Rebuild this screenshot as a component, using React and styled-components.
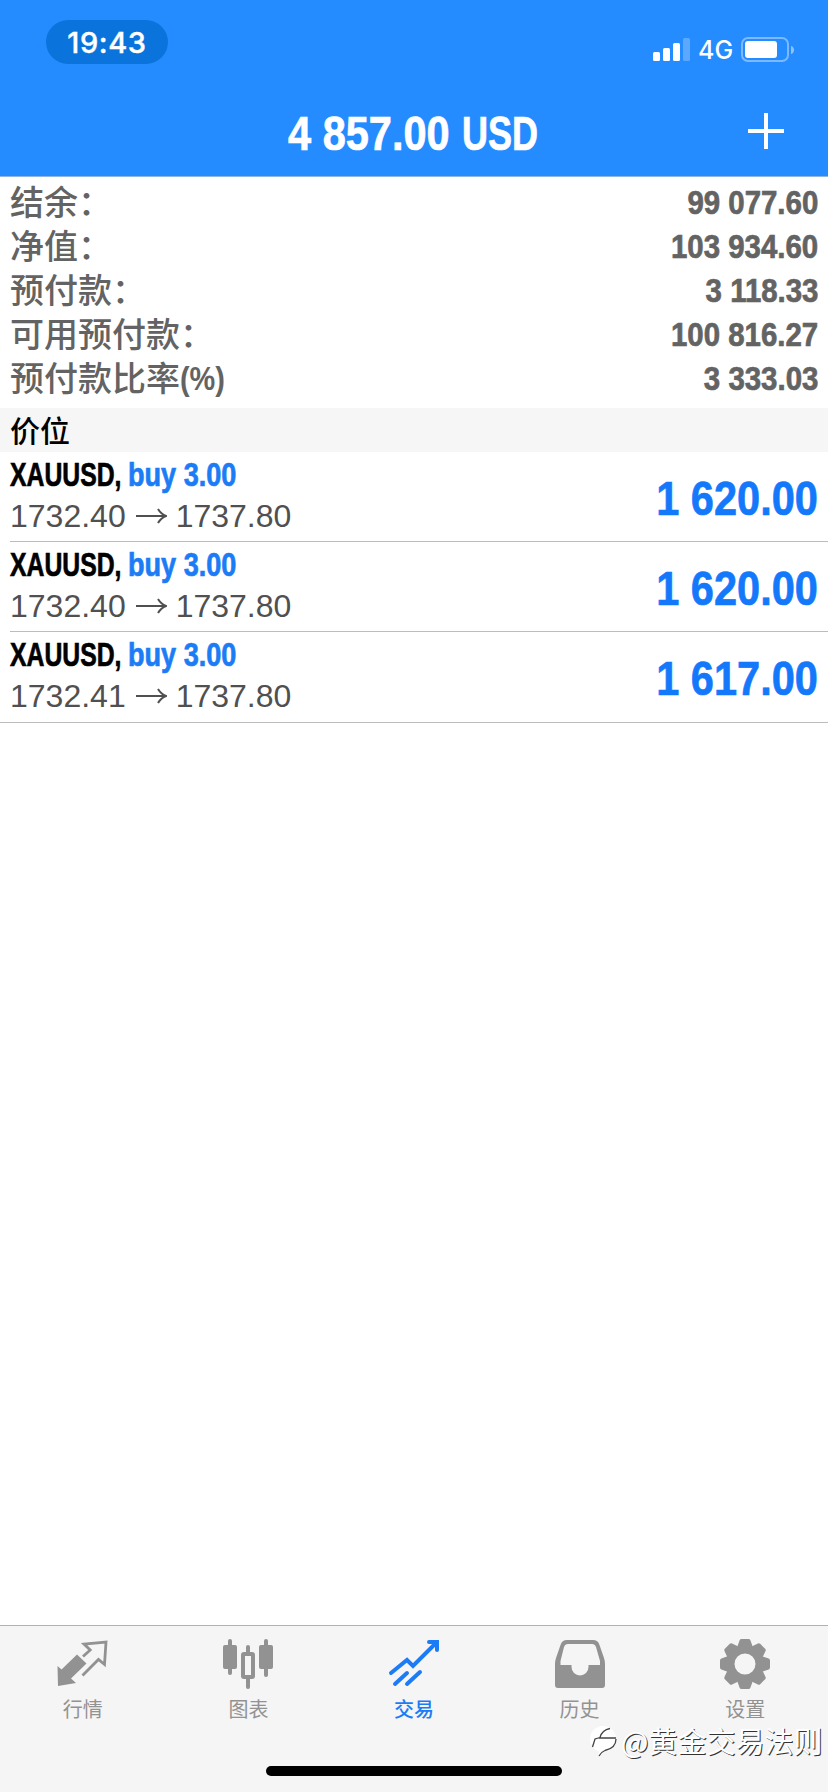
import React from 'react'
import styled, { createGlobalStyle } from 'styled-components'

const sans = '"Liberation Sans", "Noto Sans CJK SC", sans-serif'
const cjk = '"Noto Sans CJK SC", sans-serif'

const GlobalStyle = createGlobalStyle`
*{
box-sizing:border-box;
}
body{
margin:0;
background:#fff;
}
`

const Container = styled.div`
width: 828px;
height: 1792px;
display: flex;
flex-direction:column;
overflow:hidden;
background:#fff;
`

// bold text squeezed horizontally, $width is the room it takes in the line
const Condensed = styled.span`
display: inline-block;
width: ${p => p.$width ? p.$width + 'px' : 'auto'};
white-space:pre;
-webkit-text-stroke: .7px currentColor;
transform: scaleX(${p => p.$scale || 0.865});
transform-origin: ${p => p.$right ? 'right' : 'left'} center;
`

const Header = styled.header`
height: 177px;
display: flex;
flex-direction:column;
background:#258cff;
color:white;
border-bottom: 1px solid #8fb5e3;
`

const StatusBar = styled.div`
height: 84px;
padding: 20px 33px 0 46px;
display: flex;
justify-content: space-between;
`

const Time = styled.div`
width: 122px;
height: 44px;
border-radius: 22px;
background:#0a74dc;
font: 500 29px/45px Inter, sans-serif;
letter-spacing: .6px;
-webkit-text-stroke: .4px white;
text-align:center;
`

const Status = styled.div`
height: 60px;
display: flex;
align-items:center;
`

const Network = styled.span`
width: 36px;
margin: 0 7px 0 8px;
font: 500 25px/30px Inter, sans-serif;
`

const TitleBar = styled.div`
flex:1;
display: grid;
grid-template-columns: 1fr auto 1fr;
align-items:center;
padding: 0 44px;
`

const Title = styled.h1`
grid-column: 2;
display: flex;
margin: 7px 0 0;
font: bold 48px/56px ${sans};
white-space:nowrap;
`

const AddButton = styled.button`
justify-self: end;
width: 36px;
height: 36px;
margin-top: 2px;
padding: 0;
border:none;
background:none;
`

const Account = styled.section`
height: 231px;
padding: 3px 10px 0;
`

const AccountRow = styled.div`
height: 44px;
display: flex;
justify-content: space-between;
color:#636363;
`

const Label = styled.span`
display: flex;
height: 42px;
font: 500 34px/41px ${cjk};
`

const Unit = styled(Condensed)`
font: bold 34px/44px ${sans};
-webkit-text-stroke: 0;
`

const Value = styled(Condensed)`
font: bold 34px/44px ${sans};
`

const SectionTitle = styled.h2`
height: 44px;
margin: 0;
padding: 0 10px;
background:#f6f6f6;
color:black;
font: 500 30px/43px ${cjk};
`

const Position = styled.div`
margin-left: ${p => p.$last ? 0 : '10px'};
padding: 0 10px 0 ${p => p.$last ? '10px' : 0};
height: ${p => p.$last ? '91px' : '90px'};
display: flex;
justify-content: space-between;
border-bottom: 1px solid #bcbcbc;
`

const Symbol = styled.div`
height: 44px;
display: flex;
font: bold 33px/45px ${sans};
color:black;
`

const Side = styled(Condensed)`
color:#1c7cf5;
`

const Prices = styled.div`
height: 40px;
display: flex;
align-items:center;
gap: 9px;
font: 32px/40px ${sans};
color:#505050;
`

const Profit = styled(Condensed)`
font: bold 48px/93px ${sans};
color:#1478fa;
`

const Space = styled.div`
flex:1;
`

const TabBar = styled.nav`
height: 167px;
display: flex;
flex-direction:column;
align-items:center;
border-top: 1px solid #b2b2b2;
background:#f5f5f5;
`

const Tabs = styled.div`
width: 100%;
height: 140px;
display: grid;
grid-template-columns: repeat(5, 1fr);
`

const Tab = styled.a`
display: flex;
flex-direction:column;
align-items:center;
padding-top: 13px;
color:${p => p.$active ? '#1c7cf5' : '#929292'};
font: ${p => p.$active ? 500 : 400} 20px/24px ${cjk};
svg{
margin-bottom: 8px;
overflow:visible;
}
`

const HomeIndicator = styled.div`
width: 296px;
height: 10px;
border-radius: 5px;
background:black;
`

const Watermark = styled.div`
position: absolute;
left: 590px;
top: 1723px;
display: flex;
align-items:center;
gap: 3px;
color:white;
font: 29px/34px ${cjk};
text-shadow: 1px 1px 0 #333;
white-space:nowrap;
`

const SignalIcon = () => (
    <svg width="37" height="24" viewBox="0 0 37 24" fill="white">
        <rect x="0" y="14" width="7" height="9" rx="1.5" />
        <rect x="10" y="10" width="7" height="13" rx="1.5" />
        <rect x="20" y="5" width="7" height="18" rx="1.5" />
        <rect x="30" y="0" width="7" height="23" rx="1.5" opacity=".25" />
    </svg>
)

const BatteryIcon = () => (
    <svg width="54" height="26" viewBox="0 0 54 26">
        <rect x="1" y="1" width="46" height="23" rx="6" fill="none" stroke="#7cb9ff" strokeWidth="2" />
        <rect x="4" y="4" width="32" height="17" rx="3" fill="white" />
        <path d="M50 9c4 1 4 7 0 8z" fill="#8cc3ff" />
    </svg>
)

const PlusIcon = () => (
    <svg width="36" height="36" viewBox="0 0 36 36" stroke="white" strokeWidth="4" display="block">
        <path d="M0 18h36M18 0v36" />
    </svg>
)

const ArrowIcon = () => (
    <svg width="32" height="20" viewBox="0 0 32 20" fill="none" stroke="#505050" strokeWidth="2">
        <path d="M1 10h29M23 3q3 5 8 7q-5 2-8 7" />
    </svg>
)

const QuotesIcon = () => (
    <svg width="50" height="50" viewBox="0 0 50 50">
        <path d="M-.5 27L3.500 30.500L19 15.500L28.500 24.500L13 39.500L18 44L0 47z" fill="currentColor" />
        <path d="M25 17.500L32.200 11L26 5L48 3L46.500 25.500L40.500 20.500L24.500 36.500" fill="none" stroke="currentColor" strokeWidth="2.800" />
    </svg>
)

const ChartIcon = () => (
    <svg width="50" height="50" viewBox="0 0 50 50" fill="currentColor">
        <rect x="5" y="0" width="4" height="36" rx="2" />
        <rect x="0" y="6" width="14" height="24" rx="2" />
        <rect x="41" y="0" width="4" height="38" rx="2" />
        <rect x="36" y="6" width="14" height="24" rx="2" />
        <rect x="23" y="6" width="4" height="9" rx="2" />
        <rect x="23" y="37" width="4" height="13" rx="2" />
        <rect x="20" y="15" width="10" height="23" rx="1" fill="none" stroke="currentColor" strokeWidth="4" />
    </svg>
)

const TradeIcon = () => (
    <svg width="50" height="50" viewBox="0 0 50 50" fill="none" stroke="currentColor" strokeWidth="4" strokeLinecap="round">
        <path d="M2 34L18 21L24 27L47 4M6 45L18 34M18 45L31 33" />
        <path d="M40 3h8v8" strokeLinejoin="miter" />
    </svg>
)

const HistoryIcon = () => (
    <svg width="50" height="50" viewBox="0 0 50 50" fill="currentColor" fillRule="evenodd">
        <path d="M12 1h26q5 0 6.500 5L49 19q1 3 1 6v21q0 3-3 3H3q-3 0-3-3V25q0-3 1-6L5.500 6Q7 1 12 1zM13 5q-3 0-4 3L5.500 22v4h11v2a8.500 8.500 0 0 0 17 0v-2h11.500v-4L41 8q-1-3-4-3z" />
    </svg>
)

const SettingsIcon = () => (
    <svg width="50" height="50" viewBox="-25 -25 50 50" fill="none" stroke="currentColor" strokeLinejoin="round">
        <circle r="14.500" strokeWidth="8" />
        {[0, 45, 90, 135, 180, 225, 270, 315].map(angle => (
            <path key={angle} d="M-6 -16L-3.500 -23H3.500L6 -16Z" fill="currentColor" strokeWidth="4" transform={`rotate(${angle})`} />
        ))}
    </svg>
)

const WatermarkIcon = () => (
    <svg width="28" height="34" viewBox="0 0 28 34">
        <circle cx="13" cy="16" r="13" fill="white" />
        <path d="M8 33l2-6h8z" fill="white" />
        <path d="M2.500 24L5 16L10 14.500Q12 7 20 5.500M9 15H26M26 16Q26 25 15 27.500Q11 29 9 33" fill="none" stroke="#444" strokeWidth="1.300" />
    </svg>
)

const account = [
    { label: '结余：', value: '99 077.60' },
    { label: '净值：', value: '103 934.60' },
    { label: '预付款：', value: '3 118.33' },
    { label: '可用预付款：', value: '100 816.27' },
    { label: '预付款比率', unit: '(%)', value: '3 333.03' },
]

const positions = [
    { open: '1732.40', current: '1737.80', profit: '1 620.00' },
    { open: '1732.40', current: '1737.80', profit: '1 620.00' },
    { open: '1732.41', current: '1737.80', profit: '1 617.00' },
]

const tabs = [
    { label: '行情', Icon: QuotesIcon },
    { label: '图表', Icon: ChartIcon },
    { label: '交易', Icon: TradeIcon, active: true },
    { label: '历史', Icon: HistoryIcon },
    { label: '设置', Icon: SettingsIcon },
]

const App = () => {
    return (
        <Container>
            <GlobalStyle />
            <Header>
                <StatusBar>
                    <Time>19:43</Time>
                    <Status>
                        <SignalIcon />
                        <Network>4G</Network>
                        <BatteryIcon />
                    </Status>
                </StatusBar>
                <TitleBar>
                    <Title>
                        <Condensed $width={174}>4 857.00</Condensed>
                        <Condensed $width={78} $scale={0.75}>USD</Condensed>
                    </Title>
                    <AddButton><PlusIcon /></AddButton>
                </TitleBar>
            </Header>
            <Account>
                {account.map(row => (
                    <AccountRow key={row.label}>
                        <Label>{row.label}{row.unit && <Unit $scale={0.85}>{row.unit}</Unit>}</Label>
                        <Value $right>{row.value}</Value>
                    </AccountRow>
                ))}
            </Account>
            <SectionTitle>价位</SectionTitle>
            {positions.map((item, i) => (
                <Position key={i} $last={i === positions.length - 1}>
                    <div>
                        <Symbol>
                            <Condensed $width={118} $scale={0.75}>XAUUSD,</Condensed>
                            <Side $scale={0.82}>buy 3.00</Side>
                        </Symbol>
                        <Prices>{item.open}<ArrowIcon />{item.current}</Prices>
                    </div>
                    <Profit $right>{item.profit}</Profit>
                </Position>
            ))}
            <Space />
            <TabBar>
                <Tabs>
                    {tabs.map(({ label, Icon, active }) => (
                        <Tab key={label} $active={active}><Icon />{label}</Tab>
                    ))}
                </Tabs>
                <HomeIndicator />
            </TabBar>
            <Watermark><WatermarkIcon />@黄金交易法则</Watermark>
        </Container>
    )
}

export default App
